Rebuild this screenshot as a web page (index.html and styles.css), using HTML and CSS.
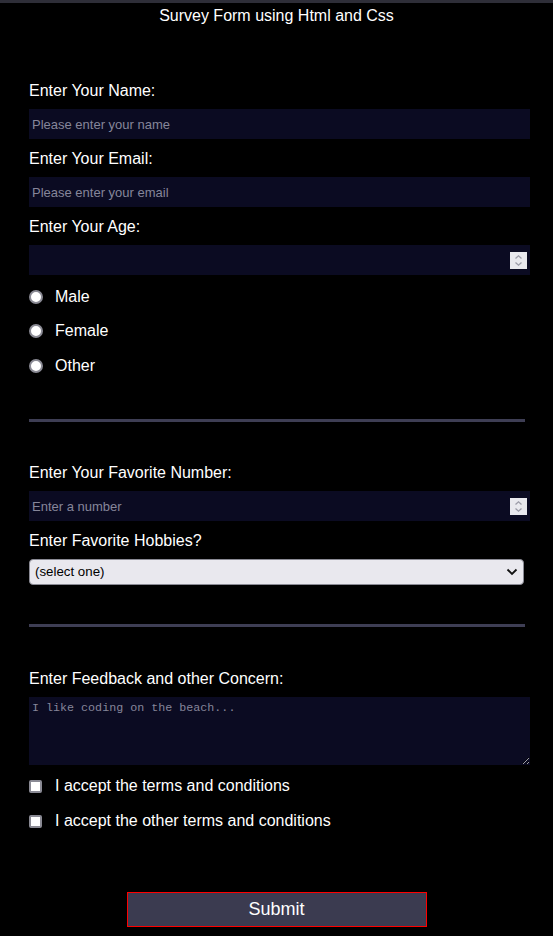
FILE: index.html
```html
<!DOCTYPE html>
<html lang="en">
<head>
<meta charset="utf-8">
<title>Survey Form</title>
<link rel="stylesheet" href="styles.css">
</head>
<body>
<div class="topbar"></div>
<h1 class="title">Survey Form using Html and Css</h1>
<form class="form">
  <label class="label" for="name">Enter Your Name:</label>
  <input class="input" id="name" type="text" placeholder="Please enter your name">

  <label class="label" for="email">Enter Your Email:</label>
  <input class="input" id="email" type="email" placeholder="Please enter your email">

  <label class="label" for="age">Enter Your Age:</label>
  <div class="num-wrap">
    <input class="input" id="age" type="number">
    <span class="spin"><svg width="17" height="17" viewBox="0 0 17 17"><path d="M5.5 6.5 L8.5 3.8 L11.5 6.5" fill="none" stroke="#9c9ca8" stroke-width="1.3"/><path d="M5.5 10.5 L8.5 13.2 L11.5 10.5" fill="none" stroke="#9c9ca8" stroke-width="1.3"/></svg></span>
  </div>

  <div class="choices">
    <label class="choice"><input class="radio" type="radio" name="gender"> Male</label>
    <label class="choice"><input class="radio" type="radio" name="gender"> Female</label>
    <label class="choice"><input class="radio" type="radio" name="gender"> Other</label>
  </div>

  <hr class="rule rule-one">

  <label class="label" for="fav">Enter Your Favorite Number:</label>
  <div class="num-wrap">
    <input class="input" id="fav" type="number" placeholder="Enter a number">
    <span class="spin"><svg width="17" height="17" viewBox="0 0 17 17"><path d="M5.5 6.5 L8.5 3.8 L11.5 6.5" fill="none" stroke="#9c9ca8" stroke-width="1.3"/><path d="M5.5 10.5 L8.5 13.2 L11.5 10.5" fill="none" stroke="#9c9ca8" stroke-width="1.3"/></svg></span>
  </div>

  <label class="label label-tight" for="hobby">Enter Favorite Hobbies?</label>
  <div class="select-wrap">
    <select class="select" id="hobby">
      <option>(select one)</option>
      <option>Coding</option>
      <option>Reading</option>
    </select>
    <svg class="chev" width="12" height="8" viewBox="0 0 12 8"><path d="M1.5 1.5 L6 6 L10.5 1.5" fill="none" stroke="#111" stroke-width="1.8"/></svg>
  </div>

  <hr class="rule rule-two">

  <label class="label" for="feedback">Enter Feedback and other Concern:</label>
  <textarea class="textarea" id="feedback" placeholder="I like coding on the beach..."></textarea>

  <div class="checks">
    <label class="choice"><input class="check" type="checkbox"> I accept the terms and conditions</label>
    <label class="choice"><input class="check" type="checkbox"> I accept the other terms and conditions</label>
  </div>

  <div class="actions">
    <button class="submit" type="submit">Submit</button>
  </div>
</form>
</body>
</html>
```

FILE: styles.css
```css
html, body {
  margin: 0;
  padding: 0;
  background: #000;
}

body {
  color: #fff;
  font-family: "Liberation Sans", Arial, sans-serif;
  width: 553px;
}

.topbar {
  height: 3px;
  background: #2e2e38;
}

.title {
  margin: 0;
  font-size: 16px;
  line-height: 26px;
  font-weight: normal;
  text-align: center;
}

.form {
  padding: 51px 0 0 29px;
  width: 501px;
}

.label {
  display: block;
  font-size: 16px;
  line-height: 20px;
  padding-top: 1px;
  margin-bottom: 8px;
}

.label-tight {
  margin-bottom: 7.5px;
}

.input {
  display: block;
  box-sizing: border-box;
  width: 501px;
  height: 30px;
  margin: 0 0 9px 0;
  padding: 0 3px;
  border: none;
  outline: none;
  background: #0b0b22;
  color: #fff;
  font-family: "Liberation Sans", Arial, sans-serif;
  font-size: 13px;
}

.input::placeholder,
.textarea::placeholder {
  color: #86869a;
}

.input::-webkit-inner-spin-button,
.input::-webkit-outer-spin-button {
  -webkit-appearance: none;
  margin: 0;
}

.input[type=number] {
  -moz-appearance: textfield;
}

.num-wrap {
  position: relative;
  width: 501px;
}

.spin {
  position: absolute;
  right: 3px;
  top: 7px;
  width: 17px;
  height: 17px;
  background: #e9e9ee;
  display: block;
}

.spin svg {
  display: block;
}

.choices {
  display: flex;
  flex-direction: column;
  gap: 14.5px;
  padding-top: 2.5px;
}

.choice {
  display: flex;
  align-items: center;
  font-size: 16px;
  line-height: 20px;
  height: 20px;
}

.radio {
  -webkit-appearance: none;
  appearance: none;
  box-sizing: border-box;
  width: 14px;
  height: 14px;
  margin: 0 12px 0 0;
  border-radius: 50%;
  border: 2px solid #8a8a94;
  background: #fff;
}

.check {
  -webkit-appearance: none;
  appearance: none;
  box-sizing: border-box;
  width: 13px;
  height: 13px;
  margin: 0 13px 0 0;
  border-radius: 2px;
  border: 2px solid #8a8a94;
  background: #fff;
}

.rule {
  border: none;
  height: 3px;
  width: 496px;
  background: #3e3e54;
  margin: 0;
}

.rule-one {
  margin-top: 43.5px;
  margin-bottom: 40px;
}

.rule-two {
  margin-top: 39.5px;
  margin-bottom: 41px;
}

.select-wrap {
  position: relative;
  width: 495px;
}

.select {
  -webkit-appearance: none;
  appearance: none;
  display: block;
  box-sizing: border-box;
  width: 495px;
  height: 26px;
  margin: 0;
  padding: 0 5px;
  border: 1px solid #8a8a94;
  border-radius: 4px;
  background: #e9e8ee;
  color: #000;
  font-family: "Liberation Sans", Arial, sans-serif;
  font-size: 13.3px;
}

.chev {
  position: absolute;
  right: 6px;
  top: 9px;
  pointer-events: none;
}

.textarea {
  display: block;
  box-sizing: border-box;
  width: 501px;
  height: 68px;
  margin: 0 0 11px 0;
  padding: 4px 3px;
  border: none;
  outline: none;
  background: #0b0b22;
  color: #fff;
  font-family: "Liberation Mono", "Courier New", monospace;
  font-size: 11.7px;
  line-height: 15px;
}

.checks {
  display: flex;
  flex-direction: column;
  gap: 15px;
}

.actions {
  display: flex;
  justify-content: center;
  width: 553px;
  margin-left: -29px;
  padding-top: 61px;
  padding-bottom: 9px;
}

.submit {
  box-sizing: border-box;
  width: 300px;
  height: 35px;
  margin: 0;
  border: 1px solid #ff0000;
  background: #3b3b50;
  color: #fff;
  font-family: "Liberation Sans", Arial, sans-serif;
  font-size: 18px;
  cursor: pointer;
}
```
